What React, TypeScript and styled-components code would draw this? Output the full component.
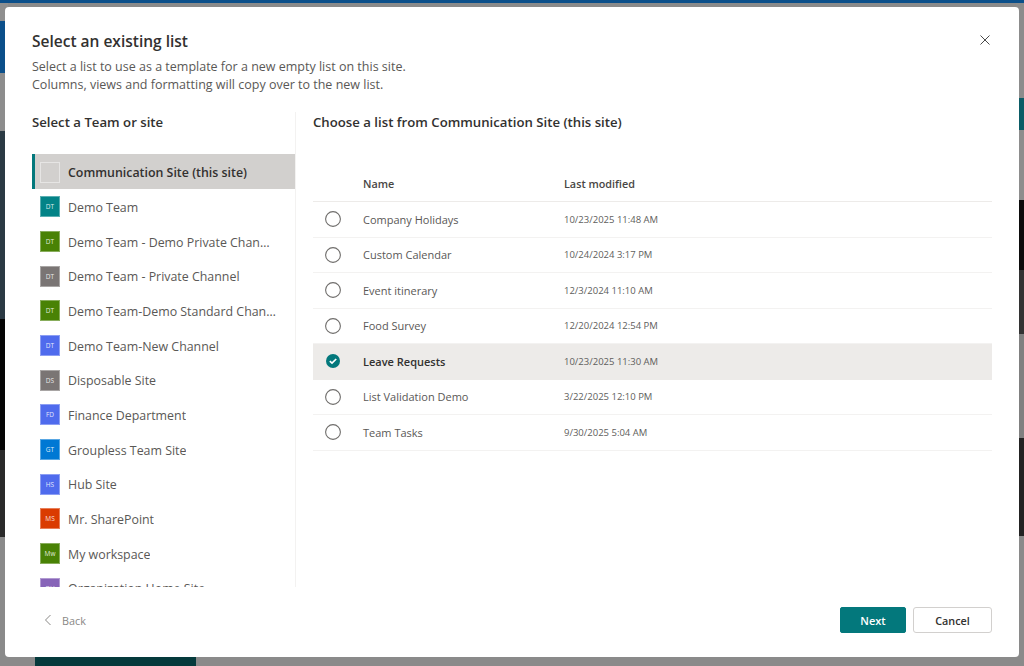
import styled, { createGlobalStyle } from "styled-components";

const GlobalStyle = createGlobalStyle`
  html, body {
    margin: 0;
    padding: 0;
    background: #8a8a8a;
  }
  * {
    box-sizing: border-box;
  }
`;

interface Site {
  name: string;
  initials: string;
  color: string;
}

const sites: Site[] = [
  { name: "Demo Team", initials: "DT", color: "#038387" },
  { name: "Demo Team - Demo Private Channel", initials: "DT", color: "#498205" },
  { name: "Demo Team - Private Channel", initials: "DT", color: "#7a7574" },
  { name: "Demo Team-Demo Standard Channel", initials: "DT", color: "#498205" },
  { name: "Demo Team-New Channel", initials: "DT", color: "#4f6bed" },
  { name: "Disposable Site", initials: "DS", color: "#7a7574" },
  { name: "Finance Department", initials: "FD", color: "#4f6bed" },
  { name: "Groupless Team Site", initials: "GT", color: "#0078d4" },
  { name: "Hub Site", initials: "HS", color: "#4f6bed" },
  { name: "Mr. SharePoint", initials: "MS", color: "#da3b01" },
  { name: "My workspace", initials: "Mw", color: "#498205" },
  { name: "Organization Home Site", initials: "OH", color: "#8764b8" },
];

const lists = [
  { name: "Company Holidays", modified: "10/23/2025 11:48 AM" },
  { name: "Custom Calendar", modified: "10/24/2024 3:17 PM" },
  { name: "Event itinerary", modified: "12/3/2024 11:10 AM" },
  { name: "Food Survey", modified: "12/20/2024 12:54 PM" },
  { name: "Leave Requests", modified: "10/23/2025 11:30 AM", selected: true },
  { name: "List Validation Demo", modified: "3/22/2025 12:10 PM" },
  { name: "Team Tasks", modified: "9/30/2025 5:04 AM" },
];

// what shows of the page behind the dialog, down each side
const leftBands = [
  { h: 18, c: "#8f8f8f" },
  { h: 52, c: "#0b4f8a" },
  { h: 58, c: "#8d8d8d" },
  { h: 188, c: "#2b3a44" },
  { h: 131, c: "#050505" },
  { h: 87, c: "#2a2a2a" },
];

const rightBands = [
  { h: 95, c: "#8c8c8c" },
  { h: 32, c: "#0b5c66" },
  { h: 70, c: "#8d8d8d" },
  { h: 70, c: "#0c0c0c" },
  { h: 64, c: "#333333" },
  { h: 104, c: "#808080" },
  { h: 98, c: "#222222" },
];

export default function App() {
  return (
    <>
      <GlobalStyle />
      <Page>
        <TopBar />
        <Backdrop>
          <Strip>
            {leftBands.map((b, i) => (
              <Band key={i} $h={b.h} $c={b.c} />
            ))}
          </Strip>
          <Strip>
            {rightBands.map((b, i) => (
              <Band key={i} $h={b.h} $c={b.c} />
            ))}
          </Strip>
        </Backdrop>
        <BottomPeek>
          <PeekBlock />
        </BottomPeek>

        <Dialog>
          <CloseButton aria-label="Close">
            <svg width="10" height="10" viewBox="0 0 10 10">
              <path d="M0.5 0.5L9.5 9.5M9.5 0.5L0.5 9.5" stroke="#4a4a4a" strokeWidth="1" fill="none" />
            </svg>
          </CloseButton>
          <Header>
            <Title>Select an existing list</Title>
            <Description>
              Select a list to use as a template for a new empty list on this site.
              <br />
              Columns, views and formatting will copy over to the new list.
            </Description>
          </Header>

          <Body>
            <LeftPanel>
              <PanelTitle>Select a Team or site</PanelTitle>
              <SiteList>
                <SiteRow $selected>
                  <SiteIcon $color="transparent" $empty />
                  <SiteName $selected>Communication Site (this site)</SiteName>
                </SiteRow>
                {sites.map((site) => (
                  <SiteRow key={site.name}>
                    <SiteIcon $color={site.color}>{site.initials}</SiteIcon>
                    <SiteName>{site.name}</SiteName>
                  </SiteRow>
                ))}
              </SiteList>
            </LeftPanel>

            <RightPanel>
              <PanelTitle>Choose a list from Communication Site (this site)</PanelTitle>
              <TableHead>
                <HeadCell>Name</HeadCell>
                <HeadCell>Last modified</HeadCell>
              </TableHead>
              {lists.map((list) => (
                <ListRow key={list.name} $selected={list.selected}>
                  <RadioCell>
                    {list.selected ? (
                      <svg width="16" height="16" viewBox="0 0 16 16">
                        <circle cx="8" cy="8" r="7" fill="#03787c" />
                        <path d="M4.8 8.2L7 10.2L11.2 6" stroke="#fff" strokeWidth="1.7" fill="none" />
                      </svg>
                    ) : (
                      <svg width="16" height="16" viewBox="0 0 16 16">
                        <circle cx="8" cy="8" r="7.4" fill="#fff" stroke="#6f6d6b" strokeWidth="1.1" />
                      </svg>
                    )}
                  </RadioCell>
                  <ListName $selected={list.selected}>{list.name}</ListName>
                  <ListDate>{list.modified}</ListDate>
                </ListRow>
              ))}
            </RightPanel>
          </Body>

          <Footer>
            <BackButton>
              <svg width="8" height="12" viewBox="0 0 8 12">
                <path d="M6.5 1L1.5 6L6.5 11" stroke="#8a8886" strokeWidth="1" fill="none" />
              </svg>
              <span>Back</span>
            </BackButton>
            <FooterActions>
              <NextButton>Next</NextButton>
              <CancelButton>Cancel</CancelButton>
            </FooterActions>
          </Footer>
        </Dialog>
      </Page>
    </>
  );
}

const Page = styled.div`
  position: relative;
  width: 1024px;
  height: 666px;
  overflow: hidden;
  background: #8a8a8a;
  font-family: "Open Sans", "Noto Sans", sans-serif;
`;

const TopBar = styled.div`
  height: 3px;
  background: #0b4f8a;
`;

const Backdrop = styled.div`
  display: flex;
  justify-content: space-between;
  height: 654px;
`;

const Strip = styled.div`
  width: 8px;
  display: flex;
  flex-direction: column;
`;

const Band = styled.div<{ $h: number; $c: string }>`
  height: ${(p) => p.$h}px;
  background: ${(p) => p.$c};
`;

const BottomPeek = styled.div`
  height: 9px;
  padding-left: 35px;
`;

const PeekBlock = styled.div`
  width: 161px;
  height: 9px;
  background: #053a3c;
`;

const Dialog = styled.div`
  position: absolute;
  left: 5px;
  top: 7px;
  width: 1014px;
  height: 650px;
  background: #fff;
  border-radius: 4px;
  display: flex;
  flex-direction: column;
  color: #323130;
`;

const CloseButton = styled.button`
  position: absolute;
  right: 29px;
  top: 28px;
  width: 10px;
  height: 10px;
  padding: 0;
  border: none;
  background: none;
  display: flex;
`;

const Header = styled.div`
  padding: 23px 27px 0;
  height: 105px;
`;

const Title = styled.h1`
  margin: 0;
  font-size: 15.5px;
  line-height: 22px;
  font-weight: 600;
  color: #323130;
`;

const Description = styled.p`
  margin: 6px 0 0;
  font-size: 12.5px;
  line-height: 18px;
  color: #5a5856;
`;

const Body = styled.div`
  display: flex;
  height: 475px;
  padding: 0 27px;
`;

const LeftPanel = styled.div`
  width: 264px;
  border-right: 1px solid #f3f2f1;
  display: flex;
  flex-direction: column;
  overflow: hidden;
`;

const RightPanel = styled.div`
  flex: 1;
  padding-left: 17px;
  display: flex;
  flex-direction: column;
`;

const PanelTitle = styled.h2`
  margin: 0;
  font-size: 13.2px;
  line-height: 20px;
  font-weight: 600;
  color: #323130;
`;

const SiteList = styled.div`
  margin-top: 22px;
  width: 263px;
`;

const SiteRow = styled.div<{ $selected?: boolean }>`
  height: 34.67px;
  padding-top: 3px;
  display: flex;
  align-items: center;
  gap: 8px;
  padding-left: ${(p) => (p.$selected ? "5px" : "8px")};
  background: ${(p) => (p.$selected ? "#d2d0ce" : "transparent")};
  border-left: ${(p) => (p.$selected ? "3px solid #03787c" : "none")};
`;

const SiteIcon = styled.div<{ $color: string; $empty?: boolean }>`
  width: 20px;
  height: 21px;
  flex: none;
  margin-top: -1px;
  background: ${(p) => p.$color};
  border: 1px solid ${(p) => (p.$empty ? "#e6e5e4" : "rgba(255, 255, 255, 0.35)")};
  color: rgba(255, 255, 255, 0.85);
  font-size: 6.5px;
  display: flex;
  align-items: center;
  justify-content: center;
`;

const SiteName = styled.div<{ $selected?: boolean }>`
  max-width: 209px;
  font-size: 12.4px;
  font-weight: ${(p) => (p.$selected ? 600 : 400)};
  color: ${(p) => (p.$selected ? "#323130" : "#5a5856")};
  white-space: nowrap;
  overflow: hidden;
  text-overflow: ellipsis;
`;

const TableHead = styled.div`
  margin-top: 32px;
  height: 38px;
  padding: 1px 0 0 50px;
  display: grid;
  grid-template-columns: 201px 1fr;
  align-items: center;
  border-bottom: 1px solid #edebe9;
`;

const HeadCell = styled.div`
  font-size: 10.8px;
  font-weight: 600;
  color: #484644;
`;

const ListRow = styled.div<{ $selected?: boolean }>`
  height: 35.5px;
  display: grid;
  grid-template-columns: 50px 201px 1fr;
  align-items: center;
  background: ${(p) => (p.$selected ? "#edebe9" : "transparent")};
  border-bottom: 1px solid ${(p) => (p.$selected ? "#edebe9" : "#f3f2f1")};
`;

const RadioCell = styled.div`
  display: flex;
  padding-left: 12px;
`;

const ListName = styled.div<{ $selected?: boolean }>`
  font-size: 11px;
  font-weight: ${(p) => (p.$selected ? 600 : 400)};
  color: ${(p) => (p.$selected ? "#323130" : "#5a5856")};
`;

const ListDate = styled.div`
  font-size: 9.5px;
  color: #605e5c;
`;

const Footer = styled.div`
  flex: 1;
  display: flex;
  justify-content: space-between;
  align-items: flex-start;
  padding: 20px 27px 0 39px;
`;

const BackButton = styled.div`
  display: flex;
  align-items: center;
  gap: 10px;
  height: 26px;
  font-size: 10.8px;
  color: #8a8886;
`;

const FooterActions = styled.div`
  display: flex;
  gap: 7px;
`;

const NextButton = styled.button`
  width: 66px;
  height: 26px;
  padding: 0;
  border: 1px solid #03787c;
  border-radius: 2px;
  background: #03787c;
  color: #fff;
  font: 600 11px "Open Sans", sans-serif;
`;

const CancelButton = styled.button`
  width: 79px;
  height: 26px;
  padding: 0;
  border: 1px solid #d2d0ce;
  border-radius: 3px;
  background: #fff;
  color: #323130;
  font: 600 10.8px "Open Sans", sans-serif;
`;
